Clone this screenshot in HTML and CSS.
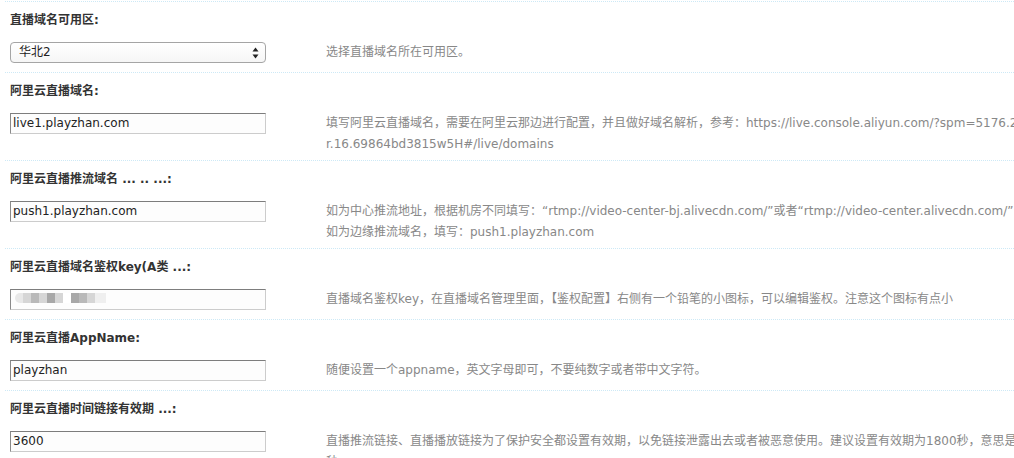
FILE: index.html
```html
<!DOCTYPE html>
<html>
<head>
<meta charset="utf-8">
<link rel="stylesheet" href="styles.css">
</head>
<body>
<div class="form">
  <div class="row">
    <div class="label">直播域名可用区:</div>
    <div class="ctrl">
      <div class="field">
        <div class="select">
          <span>华北2</span>
          <svg class="arrows" width="7" height="12" viewBox="0 0 7 12"><path d="M3.5 0.5 L6.5 4.5 L0.5 4.5 Z" fill="#222"/><path d="M3.5 11.5 L6.5 7.5 L0.5 7.5 Z" fill="#222"/></svg>
        </div>
      </div>
      <div class="desc">选择直播域名所在可用区。</div>
    </div>
  </div>
  <div class="row">
    <div class="label">阿里云直播域名:</div>
    <div class="ctrl">
      <div class="field"><div class="input">live1.playzhan.com</div></div>
      <div class="desc">填写阿里云直播域名，需要在阿里云那边进行配置，并且做好域名解析，参考：https://live.console.aliyun.com/?spm=5176.2<br>r.16.69864bd3815w5H#/live/domains</div>
    </div>
  </div>
  <div class="row">
    <div class="label">阿里云直播推流域名 ... .. ...:</div>
    <div class="ctrl">
      <div class="field"><div class="input">push1.playzhan.com</div></div>
      <div class="desc">如为中心推流地址，根据机房不同填写：“rtmp://video-center-bj.alivecdn.com/”或者“rtmp://video-center.alivecdn.com/”<br>如为边缘推流域名，填写：push1.playzhan.com</div>
    </div>
  </div>
  <div class="row">
    <div class="label">阿里云直播域名鉴权key(A类 ...:</div>
    <div class="ctrl">
      <div class="field">
        <div class="input">
          <div class="mosaic">
            <i class="m0"></i><i class="m1"></i><i class="m2"></i><i class="m1"></i><i class="m3"></i><i class="m1"></i><i class="m4"></i><i class="m3"></i><i class="m2"></i><i class="m1"></i><i class="m5"></i>
          </div>
        </div>
      </div>
      <div class="desc">直播域名鉴权key，在直播域名管理里面，【鉴权配置】右侧有一个铅笔的小图标，可以编辑鉴权。注意这个图标有点小</div>
    </div>
  </div>
  <div class="row">
    <div class="label">阿里云直播AppName:</div>
    <div class="ctrl">
      <div class="field"><div class="input">playzhan</div></div>
      <div class="desc">随便设置一个appname，英文字母即可，不要纯数字或者带中文字符。</div>
    </div>
  </div>
  <div class="row">
    <div class="label">阿里云直播时间链接有效期 ...:</div>
    <div class="ctrl">
      <div class="field"><div class="input">3600</div></div>
      <div class="desc">直播推流链接、直播播放链接为了保护安全都设置有效期，以免链接泄露出去或者被恶意使用。建议设置有效期为1800秒，意思是<br>秒。</div>
    </div>
  </div>
</div>
</body>
</html>
```

FILE: styles.css
```css
html, body {
  margin: 0;
  padding: 0;
  background: #ffffff;
  overflow: hidden;
}
body {
  font-family: "DejaVu Sans", "Noto Sans CJK SC", sans-serif;
  font-size: 12px;
  color: #333333;
}
.form {
  padding: 1px 0 0 5px;
}
.row {
  border-top: 1px dotted #cde9f6;
  padding-left: 5px;
}
.label {
  padding-top: 8px;
  height: 20px;
  line-height: 20px;
  font-weight: bold;
  color: #333333;
  white-space: nowrap;
}
.ctrl {
  display: flex;
  align-items: flex-start;
  margin-top: 12px;
}
.field {
  width: 256px;
  flex: none;
  padding-bottom: 9px;
}
.input {
  box-sizing: border-box;
  height: 21px;
  width: 256px;
  border: 1px solid;
  border-color: #7d7d7d #cccccc #cccccc #8a8a8a;
  background: #fdfdfd;
  padding-left: 2px;
  line-height: 19px;
  font-size: 12px;
  color: #222222;
  white-space: nowrap;
  overflow: hidden;
}
.select {
  box-sizing: border-box;
  height: 21px;
  width: 256px;
  border: 1px solid #a5a5a5;
  border-radius: 4px;
  background: linear-gradient(#ffffff, #f6f6f6);
  padding: 0 0 0 8px;
  display: flex;
  align-items: center;
  justify-content: space-between;
  color: #222222;
  font-size: 12px;
  line-height: 19px;
}
.arrows {
  margin-right: 6px;
}
.desc {
  margin-left: 60px;
  line-height: 21px;
  padding-bottom: 5px;
  color: #888888;
  white-space: nowrap;
}
.mosaic {
  display: flex;
  margin: 3px 0 0 2px;
  filter: blur(0.7px);
}
.mosaic i {
  display: block;
  width: 8px;
  height: 10px;
}
.mosaic .m0 { background: #e8e8e8; border-radius: 5px 0 0 5px; }
.mosaic .m1 { background: #d6d6d6; }
.mosaic .m2 { background: #b9b9b9; }
.mosaic .m3 { background: #a8a8a8; }
.mosaic .m4 { background: #ffffff; }
.mosaic .m5 { background: #efefef; width: 11px; }
```
